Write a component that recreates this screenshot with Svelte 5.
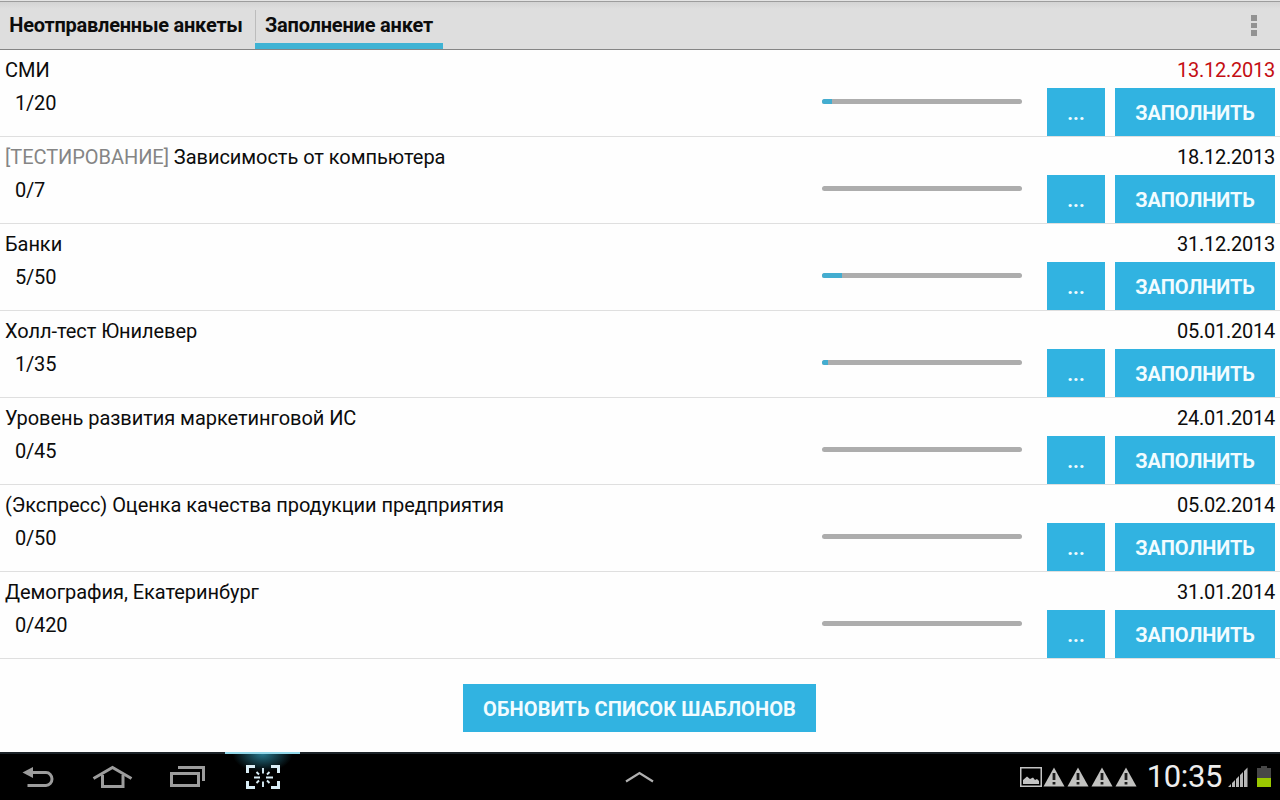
<script lang="ts">
	interface Survey {
		title: string;
		tag?: string;
		done: number;
		total: number;
		date: string;
		overdue?: boolean;
	}

	const tabs = ['Неотправленные анкеты', 'Заполнение анкет'];
	let activeTab = $state(1);

	const surveys: Survey[] = [
		{ title: 'СМИ', done: 1, total: 20, date: '13.12.2013', overdue: true },
		{ tag: '[ТЕСТИРОВАНИЕ]', title: 'Зависимость от компьютера', done: 0, total: 7, date: '18.12.2013' },
		{ title: 'Банки', done: 5, total: 50, date: '31.12.2013' },
		{ title: 'Холл-тест Юнилевер', done: 1, total: 35, date: '05.01.2014' },
		{ title: 'Уровень развития маркетинговой ИС', done: 0, total: 45, date: '24.01.2014' },
		{ title: '(Экспресс) Оценка качества продукции предприятия', done: 0, total: 50, date: '05.02.2014' },
		{ title: 'Демография, Екатеринбург', done: 0, total: 420, date: '31.01.2014' }
	];

	const warnings = [0, 1, 2, 3];
</script>

<div class="screen">
	<header class="action-bar">
		<div class="tabs">
			{#each tabs as tab, i}
				<button type="button" class="tab" class:active={activeTab === i} onclick={() => (activeTab = i)}>
					{tab}
				</button>
			{/each}
		</div>
		<button type="button" class="overflow" aria-label="Меню">
			<i></i><i></i><i></i>
		</button>
	</header>

	<main>
		<ul class="surveys">
			{#each surveys as survey}
				<li class="survey">
					<div class="info">
						<div class="title">
							{#if survey.tag}<span class="tag">{survey.tag}</span>{' '}{/if}{survey.title}
						</div>
						<div class="count">{survey.done}/{survey.total}</div>
					</div>
					<div class="progress">
						<div class="fill" style="width: {(survey.done / survey.total) * 100}%"></div>
					</div>
					<div class="side">
						<div class="date" class:overdue={survey.overdue}>{survey.date}</div>
						<div class="actions">
							<button type="button" class="btn more">...</button>
							<button type="button" class="btn fill-in">ЗАПОЛНИТЬ</button>
						</div>
					</div>
				</li>
			{/each}
		</ul>
		<button type="button" class="btn refresh">ОБНОВИТЬ СПИСОК ШАБЛОНОВ</button>
	</main>

	<footer class="system-bar">
		<nav class="nav">
			<button type="button" class="nav-key" aria-label="Назад">
				<svg width="36" height="28" viewBox="0 0 36 28">
					<path d="M9 8.500H26a6 6.500 0 0 1 0 13H7.500" fill="none" stroke="#9c9c9c" stroke-width="3" />
					<path d="M2.500 8.500L13 3V14Z" fill="#9c9c9c" />
				</svg>
			</button>
			<button type="button" class="nav-key" aria-label="Домой">
				<svg width="42" height="28" viewBox="0 0 42 28" fill="none" stroke="#9c9c9c" stroke-width="3">
					<path d="M1.500 14.500L20.500 3.500L39.500 14.500" />
					<path d="M10.500 11V22.500H31V11" />
				</svg>
			</button>
			<button type="button" class="nav-key" aria-label="Недавние">
				<svg width="38" height="28" viewBox="0 0 38 28" fill="none" stroke="#9c9c9c" stroke-width="3">
					<path d="M9 3.500H34.500V17" />
					<path d="M2.500 9.500H29.500V21.500H2.500Z" />
				</svg>
			</button>
			<button type="button" class="nav-key lit" aria-label="Снимок экрана">
				<svg width="34" height="28" viewBox="0 0 34 28" fill="none" stroke="#d9edf6">
					<path d="M1.500 9V2.500H9M25 2.500H32.500V9M32.500 17V23.500H25M9 23.500H1.500V17" stroke-width="3" />
					<path
						d="M17 4V9.500M17 17.500V23M8 13.500H14M20 13.500H27M10.500 8L13 10.500M23.500 8L21 10.500M10.500 19L13 16.500M23.500 19L21 16.500"
						stroke-width="1.900"
					/>
				</svg>
			</button>
		</nav>

		<svg class="chevron" width="32" height="16" viewBox="0 0 32 16">
			<path d="M2 12.500L15.500 4L29 12.500" fill="none" stroke="#b0b0b0" stroke-width="2.200" />
		</svg>

		<div class="status">
			<svg width="22" height="20" viewBox="0 0 22 20">
				<path d="M.75.75H21.250V19.250H.75Z" fill="none" stroke="#c4c4c4" stroke-width="1.500" />
				<path d="M3 17V13L7 9.500L10 12L13 10.500L15 13L17 12L19 14V17Z" fill="#c4c4c4" />
			</svg>
			<div class="warnings">
				{#each warnings as w (w)}
					<svg width="24" height="20" viewBox="0 0 24 20">
						<path d="M12 .5L22.500 19.500H1.500Z" fill="#c2c2c0" />
						<path d="M12 6V13M12 15V17.500" stroke="#1c1c1c" stroke-width="2.800" />
					</svg>
				{/each}
			</div>
			<span class="clock">10:35</span>
			<svg class="signal" width="20" height="20" viewBox="0 0 20 20">
				<path d="M0 20L3 17V20ZM4 20V16L7 13V20ZM8 20V12L11 9V20ZM12 20V8L15 5V20ZM16 20V4L19.500 .5V20Z" fill="#b8b8b8" />
			</svg>
			<svg width="14" height="22" viewBox="0 0 14 22">
				<path d="M4 0H10V2H14V12H0V2H4Z" fill="#474747" />
				<path d="M0 12H14V21H0Z" fill="#9ac800" />
			</svg>
		</div>
	</footer>
</div>

<style>
	:global(body) {
		margin: 0;
		background: #fff;
	}

	.screen {
		display: flex;
		flex-direction: column;
		width: 1280px;
		height: 800px;
		overflow: hidden;
		background: #fefefe;
		color: #0c0c0c;
		font-family: Roboto, 'Noto Sans', sans-serif;
		font-size: 20px;
	}

	button {
		margin: 0;
		padding: 0;
		border: none;
		background: none;
		color: inherit;
		font: inherit;
	}

	.action-bar {
		display: flex;
		justify-content: space-between;
		box-sizing: border-box;
		height: 50px;
		border-top: 1px solid #e4e4e4;
		border-bottom: 1px solid #858585;
		background: linear-gradient(#9d9d9d 1px, #d4d4d4 1px, #dedede 8px);
	}

	.tabs {
		display: flex;
	}

	.tab {
		box-sizing: border-box;
		width: 188px;
		border-bottom: 0 solid #3fb3d4;
		font-weight: 700;
		letter-spacing: -0.2px;
		white-space: nowrap;
	}

	.tab:first-child {
		width: 256px;
		margin-right: -1px;
		padding-right: 4px;
		background: linear-gradient(#bcbcbc, #bcbcbc) right 9px / 1px 31px no-repeat;
		letter-spacing: -0.24px;
	}

	.tab.active {
		padding-top: 6px;
		border-bottom-width: 6px;
	}

	.overflow {
		display: flex;
		flex-direction: column;
		align-items: center;
		gap: 2px;
		width: 52px;
		padding-top: 14px;
	}

	.overflow i {
		width: 6px;
		height: 5.5px;
		background: #929292;
	}

	main {
		display: flex;
		flex: 1;
		flex-direction: column;
		align-items: center;
	}

	.surveys {
		width: 100%;
		margin: 0;
		padding: 0;
		list-style: none;
	}

	.survey {
		display: flex;
		box-sizing: border-box;
		height: 87px;
		padding: 0 5px;
		border-bottom: 1px solid #dfdfdf;
	}

	.info {
		flex: 1;
		line-height: 33px;
		padding-top: 4px;
	}

	.title {
		letter-spacing: -0.05px;
	}

	.tag {
		color: #858585;
	}

	.count {
		padding-left: 10px;
		letter-spacing: -0.2px;
	}

	.progress {
		width: 200px;
		height: 5px;
		margin: 49px 25px 0 0;
		border-radius: 3px;
		background: #adadad;
		overflow: hidden;
	}

	.fill {
		height: 100%;
		background: #43add0;
	}

	.side {
		display: flex;
		flex-direction: column;
		width: 228px;
	}

	.date {
		height: 38px;
		line-height: 41px;
		letter-spacing: -0.25px;
		text-align: right;
	}

	.date.overdue {
		color: #c40d12;
	}

	.actions {
		display: flex;
		gap: 10px;
	}

	.btn {
		height: 48px;
		padding-top: 2px;
		background: #31b3e1;
		color: #f1fcff;
		font-weight: 700;
	}

	.more {
		width: 58px;
	}

	.fill-in {
		width: 160px;
		letter-spacing: -0.1px;
	}

	.refresh {
		width: 353px;
		margin: 25px 1px 0 0;
		letter-spacing: 0.1px;
	}

	.system-bar {
		display: grid;
		grid-template-columns: 1fr auto 1fr;
		align-items: center;
		box-sizing: border-box;
		height: 48px;
		border-top: 2px solid #1c2328;
		background: #000;
	}

	.nav {
		display: flex;
		align-self: start;
		margin-top: -2px;
	}

	.nav-key {
		display: flex;
		align-items: center;
		justify-content: center;
		box-sizing: border-box;
		width: 75px;
		height: 48px;
		padding-top: 3px;
	}

	.nav-key.lit {
		border-top: 2px solid #8fd6e8;
		padding-top: 1px;
		background: radial-gradient(ellipse 30px 18px at 50% 0, #26758a, transparent);
	}

	.status {
		display: flex;
		align-items: center;
		justify-content: flex-end;
		padding-right: 9px;
	}

	.warnings {
		display: flex;
	}

	.clock {
		margin: 0 6px 0 9px;
		color: #ededed;
		font-size: 31px;
		letter-spacing: -0.4px;
		line-height: 46px;
	}

	.signal {
		margin-right: 9px;
	}
</style>
